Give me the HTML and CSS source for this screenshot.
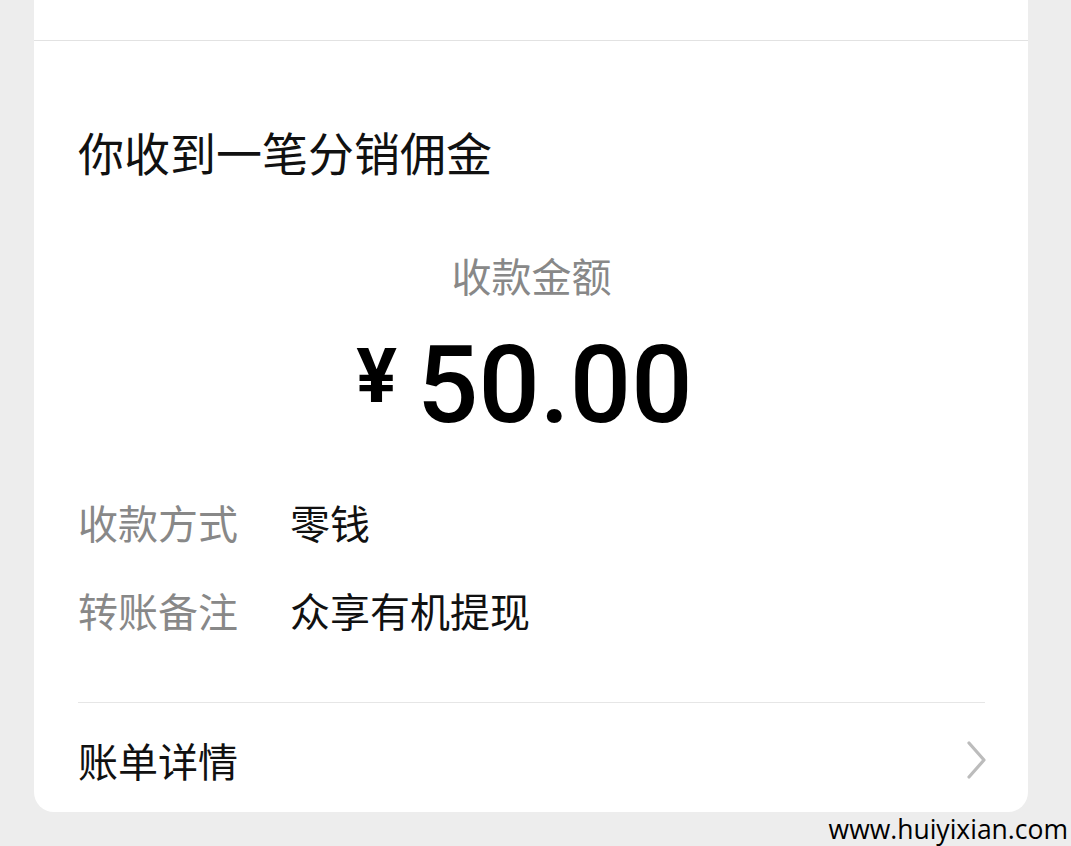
FILE: index.html
```html
<!DOCTYPE html>
<html lang="zh-CN">
<head>
    <meta charset="UTF-8">
    <meta name="viewport" content="width=device-width, initial-scale=1.0">
    <title>收款详情</title>
    <link rel="stylesheet" href="styles.css">
</head>
<body>

    <div class="card">
        <div class="card-top"></div>

        <div class="card-body">
            <h1 class="title">你收到一笔分销佣金</h1>

            <div class="amount-label">收款金额</div>
            <div class="amount">
                <span class="currency">¥</span>
                <span class="value">50.00</span>
            </div>

            <div class="info">
                <div class="info-label">收款方式</div>
                <div class="info-value">零钱</div>
                <div class="info-label">转账备注</div>
                <div class="info-value">众享有机提现</div>
            </div>

            <div class="divider"></div>

            <div class="detail-row">
                <span>账单详情</span>
                <svg class="chevron" width="24" height="40" viewBox="0 0 24 40">
                    <polyline points="4,3 19,20 4,37" fill="none" stroke="#bcbcbc" stroke-width="3.2" stroke-linecap="round" stroke-linejoin="round"/>
                </svg>
            </div>
        </div>
    </div>

    <div class="watermark">www.huiyixian.com</div>

</body>
</html>
```

FILE: styles.css
```css
body {
    margin: 0;
    background: #ededed;
    font-family: "Noto Sans CJK SC", "Noto Sans", sans-serif;
    color: #111;
}
.card {
    margin: 0 43px 0 34px;
    background: #fff;
    border-radius: 0 0 20px 20px;
}
.card-top {
    height: 40px;
    border-bottom: 1px solid #e2e2e2;
}
.card-body {
    padding: 0 43px 24px 44px;
}
.title {
    margin: 80px 0 0;
    font-size: 46px;
    font-weight: 400;
    line-height: 60px;
}
.amount-label {
    margin-top: 69px;
    text-align: center;
    font-size: 40px;
    line-height: 50px;
    color: #888;
}
.amount {
    display: flex;
    justify-content: center;
    align-items: flex-start;
    margin-top: 25px;
    padding-right: 14px;
    font-family: Roboto, sans-serif;
    color: #000;
}
.currency {
    margin: 13px 20px 0 0;
    font-size: 76px;
    line-height: 76px;
    font-weight: 700;
}
.value {
    font-size: 108px;
    line-height: 120px;
    font-weight: 500;
}
.info {
    display: grid;
    grid-template-columns: 212px 1fr;
    row-gap: 32px;
    margin-top: 49px;
    font-size: 40px;
    line-height: 56px;
}
.info-label {
    color: #888;
}
.info-value {
    color: #111;
}
.divider {
    margin-top: 64px;
    height: 1px;
    background: #e6e6e6;
}
.detail-row {
    display: flex;
    justify-content: space-between;
    align-items: center;
    margin-top: 29px;
    font-size: 40px;
    line-height: 56px;
}
.chevron {
    margin-right: -4px;
}
.watermark {
    text-align: right;
    padding-right: 3px;
    font-family: "Open Sans", sans-serif;
    font-size: 26.5px;
    line-height: 34px;
    color: #000;
}
```
